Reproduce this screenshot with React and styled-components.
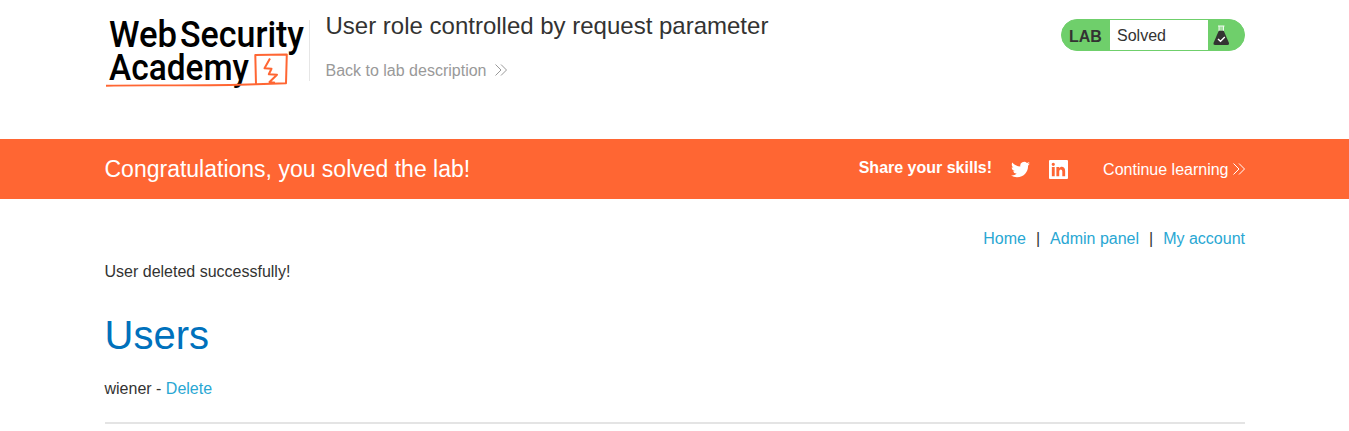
import React from "react";
import styled, { createGlobalStyle } from "styled-components";

const Global = createGlobalStyle`
  * { box-sizing: border-box; }
  body {
    margin: 0;
    background: #fff;
    color: #333332;
    font: 16px/20px Arial, "Liberation Sans", sans-serif;
    overflow: hidden;
  }
`;

const Container = styled.div`
  width: 1140.500px;
  margin: 0 auto 0 104.500px;
`;

const Header = styled(Container).attrs({ as: "header" })`
  display: flex;
  align-items: flex-start;
  height: 139px;
`;

const Logo = styled.svg`
  display: block;
  flex: none;
  width: 204px;
  height: 95px;
  overflow: visible;
`;

const TitleBlock = styled.div`
  flex: 1;
  height: 61px;
  margin-top: 20px;
  padding-left: 16px;
  border-left: 1px solid #e6e6e6;
`;

const Title = styled.h2`
  margin: -9px 0 0;
  font-size: 24px;
  line-height: 30px;
  font-weight: 400;
  white-space: nowrap;
`;

const BackLink = styled.a`
  display: flex;
  align-items: center;
  gap: 9px;
  margin-top: 20px;
  color: #999;
`;

const Chevrons = styled.svg`
  width: 12px;
  height: 12px;
  margin-top: -2px;
  fill: none;
  stroke: currentColor;
  stroke-width: 1;
`;

const Status = styled.div`
  display: flex;
  width: 184px;
  height: 32px;
  margin-top: 19px;
  border: 1px solid #6fcf6b;
  border-radius: 16px;
  background: #6fcf6b;
  overflow: hidden;
  line-height: 32px;
`;

const StatusTag = styled.span`
  width: 48px;
  padding-left: 7px;
  font-weight: 700;
  line-height: 33px;
`;

const StatusText = styled.span`
  width: 98px;
  padding-left: 7px;
  background: #fff;
`;

const Flask = styled.svg`
  width: 18px;
  height: 22px;
  margin: 4px 0 0 4px;
`;

const Banner = styled.section`
  height: 60px;
  background: #ff6633;
  color: #fff;
`;

const BannerRow = styled(Container)`
  display: flex;
  align-items: center;
  height: 60px;
`;

const Congrats = styled.h3`
  flex: 1;
  margin: 0;
  font-size: 23px;
  font-weight: 400;
`;

const Share = styled.span`
  margin: -3px 19px 0 0;
  font-weight: 700;
`;

const Social = styled.svg`
  width: ${(p) => p.$size}px;
  height: ${(p) => p.$size}px;
  margin: 1px ${(p) => p.$gap}px 0 0;
  fill: #fff;
`;

const Continue = styled.a`
  display: flex;
  align-items: center;
  gap: 4.500px;
  margin-top: 1px;
`;

const Nav = styled.nav`
  display: flex;
  justify-content: flex-end;
  gap: 10px;
  padding-top: 30px;
`;

const Link = styled.a`
  color: #29a7d3;
`;

const Message = styled.p`
  margin: 13px 0 0;
`;

const Heading = styled.h1`
  margin: 28px 0 0;
  color: #0071bc;
  font-size: 40px;
  line-height: 50px;
  font-weight: 400;
`;

const UserRow = styled.div`
  margin-top: 19px;
`;

const Rule = styled.hr`
  height: 2px;
  margin: 23px 0 0;
  border: 0;
  background: #e4e4e4;
`;

const DoubleChevron = () => (
  <Chevrons viewBox="0 0 12 12">
    <path d="M.5.5 6 6 .5 11.5M6 .5 11.5 6 6 11.5" />
  </Chevrons>
);

const LogoWord = ({ x, y, width, size = 36, children }) => (
  <text
    x={x}
    y={y}
    textLength={width}
    lengthAdjust="spacingAndGlyphs"
    fontFamily="Roboto, sans-serif"
    fontSize={size}
    fontWeight="500"
    fill="#000"
  >
    {children}
  </text>
);

export default function App() {
  return (
    <>
      <Global />
      <Header>
        <Logo viewBox="0 0 204 95">
          <LogoWord x={4} y={47.3} width={68} size={37}>Web</LogoWord>
          <LogoWord x={75} y={47.3} width={124} size={37}>Security</LogoWord>
          <LogoWord x={4} y={79.7} width={140}>Academy</LogoWord>
          <g fill="none" stroke="#ff6633" strokeLinejoin="round">
            <path d="M1 85.800C40 84.600 90 86.500 151 84.300" strokeWidth="1.900" />
            <path d="M151 84.500 150.300 55 181.800 54.500 181 83.300 151 84.300" strokeWidth="2" />
            <path d="M165 58.500 159.500 68.300 166.500 68.700 163.800 74.300 172 74.800 164.500 82 170 82.800" strokeWidth="2" />
          </g>
        </Logo>
        <TitleBlock>
          <Title>User role controlled by request parameter</Title>
          <BackLink>
            Back to lab description
            <DoubleChevron />
          </BackLink>
        </TitleBlock>
        <Status>
          <StatusTag>LAB</StatusTag>
          <StatusText>Solved</StatusText>
          <Flask viewBox="0 0 18 22">
            <path d="M7 2H11.500V8H7Z" fill="#a5dfa2" />
            <path d="M6 2H12.500M7 2V7.500M11.500 2V7.500" stroke="#effaef" fill="none" />
            <path d="M6.800 6.800H11.700L17 19Q17.500 21 15.500 21H3Q1 21 1.500 19Z" fill="#333332" />
            <path d="M6 15 8.500 17.200 12.800 13" stroke="#fff" strokeWidth="1.400" fill="none" />
          </Flask>
        </Status>
      </Header>
      <Banner>
        <BannerRow>
          <Congrats>Congratulations, you solved the lab!</Congrats>
          <Share>Share your skills!</Share>
          <Social viewBox="0 0 24 24" $size={19} $gap={19}>
            <path d="M23.950 4.570a10 10 0 0 1-2.820.770 4.960 4.960 0 0 0 2.160-2.720c-.950.550-2 .950-3.130 1.180a4.920 4.920 0 0 0-8.380 4.480C7.690 8.090 4.070 6.130 1.640 3.160a4.820 4.820 0 0 0-.670 2.480c0 1.710.870 3.210 2.190 4.100a4.900 4.900 0 0 1-2.230-.620v.060a4.920 4.920 0 0 0 3.950 4.830 5 5 0 0 1-2.210.080 4.940 4.940 0 0 0 4.600 3.420A9.870 9.870 0 0 1 0 19.540a13.990 13.990 0 0 0 7.550 2.210c9.050 0 14-7.500 14-13.980 0-.210 0-.420-.020-.630a9.940 9.940 0 0 0 2.420-2.570Z" />
          </Social>
          <Social viewBox="1 1 18 18" $size={19} $gap={35}>
            <path fillRule="evenodd" d="M2 1H18Q19 1 19 2V18Q19 19 18 19H2Q1 19 1 18V2Q1 1 2 1ZM3.700 7.700V16.300H6.400V7.700ZM5.050 3.500A1.550 1.550 0 1 0 5.050 6.600 1.550 1.550 0 0 0 5.050 3.500ZM8 7.700V16.300H10.700V12C10.700 9.200 13.600 9.300 13.600 12V16.300H16.300V11.500C16.300 7 12.100 6.500 10.600 8.900V7.700Z" />
          </Social>
          <Continue>
            Continue learning
            <DoubleChevron />
          </Continue>
        </BannerRow>
      </Banner>
      <Container as="main">
        <Nav>
          <Link>Home</Link>
          <span>|</span>
          <Link>Admin panel</Link>
          <span>|</span>
          <Link>My account</Link>
        </Nav>
        <Message>User deleted successfully!</Message>
        <Heading>Users</Heading>
        <UserRow>
          wiener - <Link>Delete</Link>
        </UserRow>
        <Rule />
      </Container>
    </>
  );
}
